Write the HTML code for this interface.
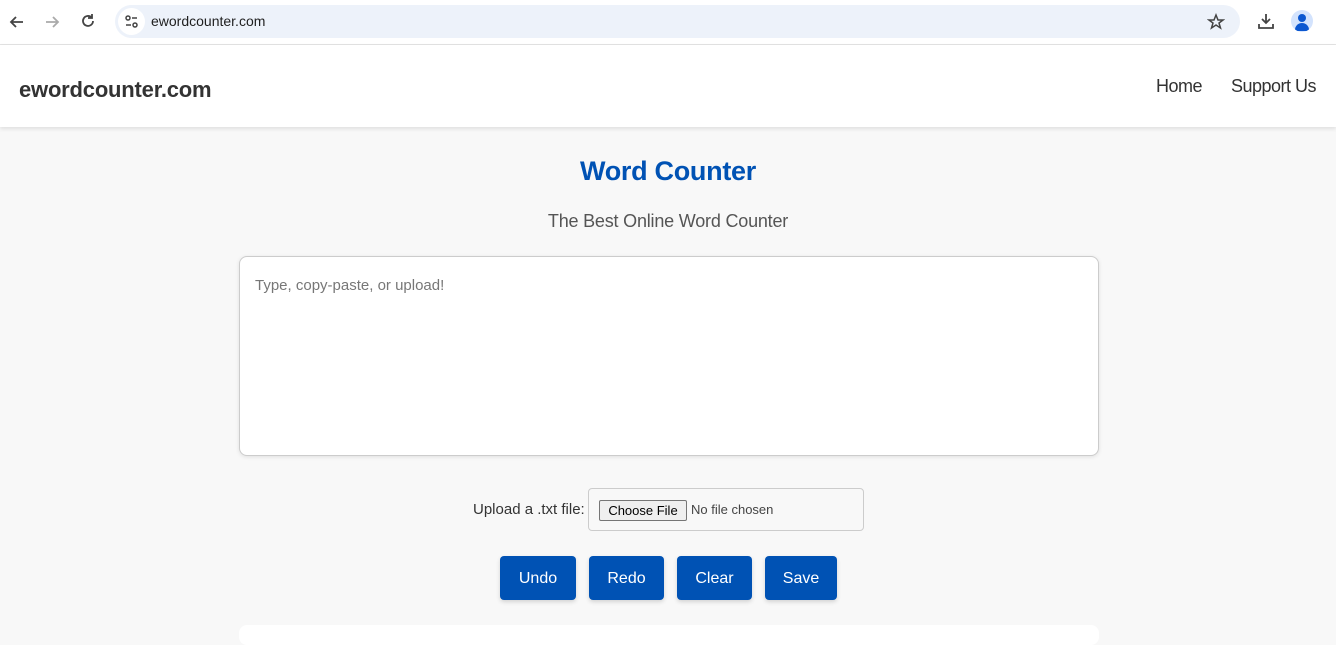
<!DOCTYPE html>
<html><head><meta charset="utf-8"><style>
*{box-sizing:border-box;margin:0;padding:0}
body{width:1336px;height:630px;overflow:hidden;background:#f8f8f8;font-family:"Liberation Sans",sans-serif;position:relative}
.chrome{position:absolute;left:0;top:0;width:1336px;height:45px;background:#fff;border-bottom:1px solid #e3e3e3}
.url{position:absolute;left:115px;top:5px;width:1125px;height:33px;background:#edf2fa;border-radius:17px}
.url .ic{position:absolute;left:3px;top:3px;width:27px;height:27px;border-radius:50%;background:#fff}
.url span{position:absolute;left:36px;top:8px;font-size:14px;color:#1f1f1f}
.hdr{position:absolute;top:45px;left:0;width:1336px;height:82px;background:#fff;box-shadow:0 2px 4px rgba(0,0,0,.1)}
.logo{position:absolute;left:19px;top:32px;font-size:22px;font-weight:bold;color:#333;letter-spacing:-0.2px}
.nav{position:absolute;top:31px;font-size:18px;color:#333;letter-spacing:-0.5px}
h1{position:absolute;top:156px;width:100%;text-align:center;font-size:27px;color:#0052b4;letter-spacing:-0.3px}
.sub{position:absolute;top:211px;width:100%;text-align:center;font-size:18px;color:#555;letter-spacing:-0.2px}
.ta{position:absolute;left:239px;top:256px;width:860px;height:200px;background:#fff;border:1px solid #ccc;border-radius:8px;box-shadow:0 1px 4px rgba(0,0,0,.1)}
.ta span{position:absolute;left:15px;top:20px;font-size:15px;color:#777}
.up{position:absolute;left:473px;top:501px;font-size:15px;color:#333}
.fb{position:absolute;left:588px;top:488px;width:276px;height:43px;border:1px solid #ccc;border-radius:4px}
.cf{position:absolute;left:10px;top:11px;width:88px;height:21px;background:#efefef;border:1px solid #767676;border-radius:2px;font-size:13px;text-align:center;line-height:19px;color:#000}
.nf{position:absolute;left:102px;top:13px;font-size:13px;color:#444}
.b{position:absolute;top:556px;height:44px;background:#0052b4;color:#fff;border-radius:4px;font-size:16px;text-align:center;line-height:46px;box-shadow:0 2px 4px rgba(0,0,0,.15)}
.card{position:absolute;left:239px;top:625px;width:860px;height:20px;background:#fff;border-radius:8px}
</style></head><body>
<div class="chrome">
<svg style="position:absolute;left:8px;top:13px" width="18" height="18" viewBox="0 0 18 18"><path d="M15 9H3M8 4L3 9l5 5" stroke="#444" stroke-width="1.8" fill="none"/></svg>
<svg style="position:absolute;left:43px;top:13px" width="18" height="18" viewBox="0 0 18 18"><path d="M3 9h12M10 4l5 5-5 5" stroke="#aaa" stroke-width="1.8" fill="none"/></svg>
<svg style="position:absolute;left:79px;top:12px" width="18" height="18" viewBox="0 0 18 18"><path d="M14 9a5 5 0 1 1-1.5-3.6M13 2v4h-4" stroke="#444" stroke-width="1.8" fill="none"/></svg>
<div class="url"><div class="ic"><svg width="27" height="27" viewBox="0 0 27 27"><circle cx="10" cy="10" r="2" stroke="#444" fill="none" stroke-width="1.5"/><path d="M14 10h5M8 17h5" stroke="#444" stroke-width="1.5"/><circle cx="17" cy="17" r="2" stroke="#444" fill="none" stroke-width="1.5"/></svg></div><span>ewordcounter.com</span>
<svg style="position:absolute;left:1092px;top:8px" width="18" height="18" viewBox="0 0 18 18"><path d="M9 2l2 5h5l-4 3 1.5 5L9 12l-4.5 3L6 10 2 7h5z" stroke="#444" stroke-width="1.5" fill="none"/></svg></div>
<svg style="position:absolute;left:1257px;top:12px" width="18" height="18" viewBox="0 0 18 18"><path d="M9 2v9M5 7l4 4 4-4M2 12v4h14v-4" stroke="#444" stroke-width="1.8" fill="none"/></svg>
<div style="position:absolute;left:1291px;top:10px;width:22px;height:22px;border-radius:50%;background:#d3e3fd;overflow:hidden"><div style="position:absolute;left:7px;top:4px;width:8px;height:8px;border-radius:50%;background:#0b57d0"></div><div style="position:absolute;left:4px;top:13px;width:14px;height:8px;border-radius:7px 7px 0 0;background:#0b57d0"></div></div>
</div>
<div class="hdr"><div class="logo">ewordcounter.com</div><div class="nav" style="left:1156px">Home</div><div class="nav" style="left:1231px">Support Us</div></div>
<h1>Word Counter</h1>
<div class="sub">The Best Online Word Counter</div>
<div class="ta"><span>Type, copy-paste, or upload!</span></div>
<div class="up">Upload a .txt file:</div>
<div class="fb"><div class="cf">Choose File</div><div class="nf">No file chosen</div></div>
<div class="b" style="left:500px;width:76px">Undo</div>
<div class="b" style="left:589px;width:75px">Redo</div>
<div class="b" style="left:677px;width:75px">Clear</div>
<div class="b" style="left:765px;width:72px">Save</div>
<div class="card"></div>
</body></html>
